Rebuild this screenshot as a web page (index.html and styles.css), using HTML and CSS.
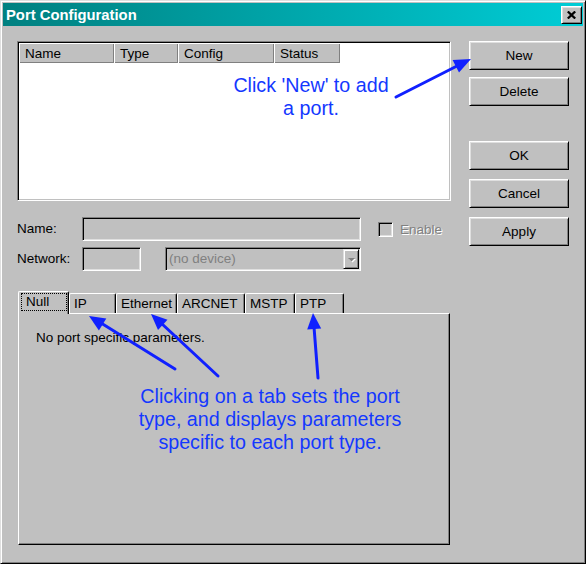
FILE: index.html
```html
<!DOCTYPE html>
<html>
<head>
<meta charset="utf-8">
<title>Port Configuration</title>
<link rel="stylesheet" href="styles.css">
</head>
<body>
<div class="window">
  <div class="titlebar">
    <span class="title">Port Configuration</span>
    <div class="close">
      <svg width="9" height="8" viewBox="0 0 9 8"><path d="M0.8 0.5 L8.2 7.5 M8.2 0.5 L0.8 7.5" stroke="#000" stroke-width="2.3" fill="none"/></svg>
    </div>
  </div>
  <div class="client">
    <div class="left">
      <div class="listbox">
        <div class="header">
          <div class="col c-name">Name</div>
          <div class="col c-type">Type</div>
          <div class="col c-config">Config</div>
          <div class="col c-status">Status</div>
        </div>
      </div>
      <div class="form">
        <div class="row">
          <span class="label">Name:</span>
          <div class="field f-name"></div>
          <div class="check"></div>
          <span class="enable">Enable</span>
        </div>
        <div class="row">
          <span class="label">Network:</span>
          <div class="field f-net"></div>
          <div class="field select">
            <span class="sel-text">(no device)</span>
            <div class="drop">
              <svg width="9" height="6" viewBox="0 0 9 6"><polygon points="2,2 9,2 5.5,5.5" fill="#fff"/><polygon points="1,1 8,1 4.5,4.5" fill="#808080"/></svg>
            </div>
          </div>
        </div>
      </div>
      <div class="tabs">
        <div class="strip">
          <div class="tab active t-null"><span class="focus">Null</span></div>
          <div class="tab t-ip">IP</div>
          <div class="tab t-eth">Ethernet</div>
          <div class="tab t-arc">ARCNET</div>
          <div class="tab t-mstp">MSTP</div>
          <div class="tab t-ptp">PTP</div>
        </div>
        <div class="panel">No port specific parameters.</div>
      </div>
    </div>
    <div class="right">
      <div class="btn">New</div>
      <div class="btn b-delete">Delete</div>
      <div class="btn b-ok">OK</div>
      <div class="btn b-cancel">Cancel</div>
      <div class="btn b-apply">Apply</div>
    </div>
  </div>

  <div class="note note1">Click 'New' to add<br>a port.</div>
  <div class="note note2">Clicking on a tab sets the port<br>type, and displays parameters<br>specific to each port type.</div>

  <svg class="arrows" width="586" height="564" viewBox="0 0 586 564">
    <g stroke="#1020ff" stroke-width="3" stroke-linecap="round" fill="none">
      <line x1="396" y1="97" x2="457" y2="66"/>
      <line x1="175" y1="369" x2="101" y2="323"/>
      <line x1="218" y1="376" x2="161" y2="323"/>
      <line x1="318" y1="378" x2="314" y2="327"/>
    </g>
    <g fill="#1020ff">
      <polygon points="471,59 459,72.5 452.6,60.1"/>
      <polygon points="89,316 106.3,318.4 98.9,330.4"/>
      <polygon points="151,314 167.5,319.8 158,330"/>
      <polygon points="313,313 321.2,328.4 307.2,329.5"/>
    </g>
  </svg>
</div>
</body>
</html>
```

FILE: styles.css
```css
* { box-sizing: border-box; }

body {
  margin: 0;
  font-family: "Liberation Sans", Arial, sans-serif;
  font-size: 13.5px;
  color: #000;
}

.window {
  position: relative;
  width: 586px;
  height: 564px;
  background: #c0c0c0;
  border: 1px solid;
  border-color: #dfdfdf #000 #000 #dfdfdf;
  box-shadow: inset 1px 1px #fff, inset -1px -1px #808080;
  padding: 2px;
}

.titlebar {
  display: flex;
  align-items: center;
  justify-content: space-between;
  height: 23px;
  background: linear-gradient(to right, #008080, #00cdd6);
  padding: 0 1px 0 3px;
}

.title {
  color: #fff;
  font-weight: bold;
  font-size: 14.8px;
}

.close {
  width: 21px;
  height: 18px;
  background: #c0c0c0;
  border: 1px solid;
  border-color: #fff #000 #000 #fff;
  box-shadow: inset 1px 1px #dfdfdf, inset -1px -1px #808080;
  display: flex;
  align-items: center;
  justify-content: center;
}
.close svg { display: block; }

.client {
  display: flex;
  padding: 15px 0 0 14px;
}

.left {
  width: 434px;
  display: flex;
  flex-direction: column;
}

.right {
  width: 100px;
  margin-left: 18px;
  display: flex;
  flex-direction: column;
}

/* list view */
.listbox {
  height: 160px;
  background: #fff;
  border: 1px solid;
  border-color: #808080 #fff #fff #808080;
  box-shadow: inset 1px 1px #000, inset -1px -1px #c0c0c0;
  padding: 1px;
}

.header {
  display: flex;
  height: 20px;
}

.col {
  background: #c0c0c0;
  box-shadow: inset 1px 1px #fff, inset -1px -1px #808080;
  padding: 1px 0 0 6px;
  line-height: 19px;
}
.c-name { width: 95px; }
.c-type { width: 64px; }
.c-config { width: 96px; }
.c-status { width: 66px; }

/* form */
.form {
  margin-top: 16px;
  display: flex;
  flex-direction: column;
  gap: 6px;
}

.row {
  display: flex;
  align-items: center;
  height: 24px;
}

.label {
  width: 65px;
  line-height: 24px;
}

.field {
  height: 24px;
  background: #c0c0c0;
  border: 1px solid;
  border-color: #808080 #fff #fff #808080;
  box-shadow: inset 1px 1px #000, inset -1px -1px #dfdfdf;
}

.f-name { width: 279px; }
.f-net { width: 59px; }

.check {
  width: 15px;
  height: 15px;
  margin-left: 17px;
  background: #c0c0c0;
  border: 1px solid;
  border-color: #808080 #fff #fff #808080;
  box-shadow: inset 1px 1px #000, inset -1px -1px #dfdfdf;
}

.enable {
  margin-left: 7px;
  color: #808080;
  text-shadow: 1px 1px #fff;
}

.select {
  width: 196px;
  margin-left: 24px;
  display: flex;
  justify-content: space-between;
  padding: 1px;
}

.sel-text {
  color: #808080;
  padding-left: 2px;
  line-height: 20px;
}

.drop {
  width: 16px;
  height: 20px;
  background: #c0c0c0;
  border: 1px solid;
  border-color: #dfdfdf #000 #000 #dfdfdf;
  box-shadow: inset 1px 1px #fff, inset -1px -1px #808080;
  display: flex;
  align-items: center;
  justify-content: center;
  padding-top: 1px;
}
.drop svg { display: block; }

/* tabs */
.tabs {
  margin-top: 20px;
  margin-left: 1px;
}

.strip {
  display: flex;
  align-items: flex-end;
  height: 22px;
  position: relative;
  z-index: 1;
}

.tab {
  height: 20px;
  background: #c0c0c0;
  border-top: 1px solid #fff;
  border-left: 1px solid #fff;
  border-right: 1px solid #000;
  border-radius: 2px 2px 0 0;
  box-shadow: inset -1px 0 #808080;
  padding-left: 4px;
  line-height: 19px;
  white-space: nowrap;
}

.tab.active {
  height: 23px;
  margin-bottom: -1px;
  padding: 1px 1px 0 2px;
}

.focus {
  display: block;
  height: 18px;
  border: 1px dotted #000;
  padding-left: 4px;
  line-height: 16px;
}

.t-null { width: 51px; }
.t-ip { width: 47px; }
.t-eth { width: 61px; }
.t-arc { width: 68px; }
.t-mstp { width: 50px; }
.t-ptp { width: 49px; }

.panel {
  width: 432px;
  height: 232px;
  border: 1px solid;
  border-color: #fff #000 #000 #fff;
  box-shadow: inset -1px -1px #808080;
  padding: 16px 0 0 17px;
  line-height: 15px;
}

/* buttons */
.btn {
  height: 29px;
  background: #c0c0c0;
  border: 1px solid;
  border-color: #fff #000 #000 #fff;
  box-shadow: inset 1px 1px #dfdfdf, inset -1px -1px #808080;
  text-align: center;
  line-height: 27px;
}
.b-delete { margin-top: 7px; }
.b-ok { margin-top: 35px; }
.b-cancel { margin-top: 9px; }
.b-apply { margin-top: 9px; }

/* annotations */
.note {
  position: absolute;
  color: #1438ff;
  font-size: 19.7px;
  line-height: 23px;
  text-align: center;
  white-space: nowrap;
}
.note1 { left: 210px; top: 73px; width: 200px; }
.note2 { left: 109px; top: 384px; width: 320px; }

.arrows {
  position: absolute;
  left: -1px;
  top: -1px;
  pointer-events: none;
}
```
